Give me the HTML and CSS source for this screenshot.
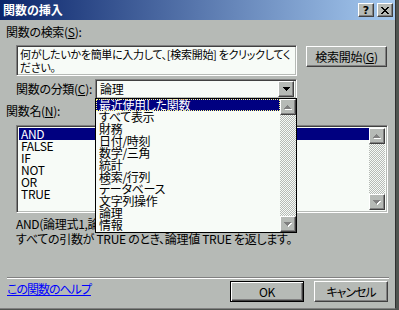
FILE: index.html
```html
<!DOCTYPE html>
<html lang="ja">
  <head>
    <meta charset="UTF-8" />
    <title>関数の挿入</title>
    <link rel="stylesheet" href="styles.css">
  </head>
  <body>
  <div class="dialog">
    <div class="titlebar">
      <span class="title">関数の挿入</span>
      <span class="tbtn help">?</span>
      <span class="tbtn">
        <svg width="8" height="7" viewBox="0 0 8 7"><path d="M0 0h2v1h1v1h2V1h1V0h2v1H7v1H6v1H5v1h1v1h1v1h1v1H6V6H5V5H3v1H2v1H0V6h1V5h1V4h1V3H2V2H1V1H0z" fill="#000"/></svg>
      </span>
    </div>

    <div class="content">
      <div class="label label-search">関数の検索(<u>S</u>):</div>
      <div class="search-row">
        <div class="field search-box">何がしたいかを簡単に入力して、[検索開始] をクリックしてく<br>ださい。</div>
        <div class="btn search-btn">検索開始(<u>G</u>)</div>
      </div>

      <div class="cat-row">
        <div class="label cat-label">関数の分類(<u>C</u>):</div>
        <div class="combo-wrap">
          <div class="field combo">
            <span class="combo-value">論理</span>
            <span class="sb-btn combo-btn">
              <svg width="7" height="4" viewBox="0 0 7 4"><path d="M0 0h7v1H6v1H5v1H4v1H3V3H2V2H1V1H0z" fill="#000"/></svg>
            </span>
          </div>
          <div class="dropdown">
            <ul class="items">
              <li class="selected focus">最近使用した関数</li>
              <li>すべて表示</li>
              <li>財務</li>
              <li>日付/時刻</li>
              <li>数学/三角</li>
              <li>統計</li>
              <li>検索/行列</li>
              <li>データベース</li>
              <li>文字列操作</li>
              <li>論理</li>
              <li>情報</li>
            </ul>
            <div class="scrollbar">
              <span class="sb-btn">
                <svg width="8" height="5" viewBox="0 0 8 5"><path d="M4 1h1v1h1v1h1v1h1v1H1V4h1V3h1V2h1z" fill="#fff"/><path d="M3 0h1v1h1v1h1v1h1v1H0V3h1V2h1V1h1z" fill="#808080"/></svg>
              </span>
              <span class="sb-btn">
                <svg width="8" height="5" viewBox="0 0 8 5"><path d="M1 1h7v1H7v1H6v1H5v1H4V4H3V3H2V2H1z" fill="#fff"/><path d="M0 0h7v1H6v1H5v1H4v1H3V3H2V2H1V1H0z" fill="#808080"/></svg>
              </span>
            </div>
          </div>
        </div>
      </div>

      <div class="label label-name">関数名(<u>N</u>):</div>
      <div class="field listbox">
        <ul class="items">
          <li class="selected">AND</li>
          <li>FALSE</li>
          <li>IF</li>
          <li>NOT</li>
          <li>OR</li>
          <li>TRUE</li>
        </ul>
        <div class="scrollbar">
          <span class="sb-btn">
            <svg width="8" height="5" viewBox="0 0 8 5"><path d="M4 1h1v1h1v1h1v1h1v1H1V4h1V3h1V2h1z" fill="#fff"/><path d="M3 0h1v1h1v1h1v1h1v1H0V3h1V2h1V1h1z" fill="#808080"/></svg>
          </span>
          <span class="sb-btn">
            <svg width="8" height="5" viewBox="0 0 8 5"><path d="M1 1h7v1H7v1H6v1H5v1H4V4H3V3H2V2H1z" fill="#fff"/><path d="M0 0h7v1H6v1H5v1H4v1H3V3H2V2H1V1H0z" fill="#808080"/></svg>
          </span>
        </div>
      </div>

      <div class="desc">
        <div>AND(論理式1,論理式2,...)</div>
        <div>すべての引数が TRUE のとき、論理値 TRUE を返します。</div>
      </div>

      <div class="separator"></div>

      <div class="footer">
        <a class="help-link" href="#">この関数のヘルプ</a>
        <div class="btn default">OK</div>
        <div class="btn kana">キャンセル</div>
      </div>
    </div>
  </div>
  </body>
</html>
```

FILE: styles.css
```css
* {
  box-sizing: border-box;
}

body {
  margin: 0;
  background-color: #505450;
  font: 12px/14px "Noto Sans CJK JP", "Noto Sans CJK SC", sans-serif;
  font-feature-settings: "palt";
  color: #000;
}

.dialog {
  width: 396px;
  height: 309px;
  background-color: #b6bab6;
  border-right: 1px solid #303030;
  border-bottom: 1px solid #808080;
}

.titlebar {
  display: flex;
  align-items: center;
  height: 20px;
  padding: 0 2px 0 3px;
  background: linear-gradient(to right, #0a246a, #a6caf0);
}

.title {
  margin-right: auto;
  color: #fff;
  font-weight: bold;
}

.tbtn {
  display: flex;
  align-items: center;
  justify-content: center;
  width: 16px;
  height: 14px;
  background-color: #b6bab6;
  border: 1px solid;
  border-color: #fff #404040 #404040 #fff;
  box-shadow: inset -1px -1px #808080;
  font: bold 11px/1 "DejaVu Sans", sans-serif;
}

.help {
  margin-right: 3px;
}

.content {
  padding: 0 7px 0 6px;
  letter-spacing: -0.3px;
}

.label {
  height: 14px;
  white-space: nowrap;
}

.label-search {
  margin-top: 5px;
}

.field {
  background-color: #f7fbf7;
  border: 1px solid;
  border-color: #808080 #fff #fff #808080;
  box-shadow: inset 1px 1px #404040, inset -1px -1px #b6bab6;
}

.btn {
  display: flex;
  align-items: center;
  justify-content: center;
  width: 74px;
  height: 21px;
  background-color: #b6bab6;
  border: 1px solid;
  border-color: #fff #404040 #404040 #fff;
  box-shadow: inset -1px -1px #808080;
  white-space: nowrap;
}

.btn.default {
  border-color: #000;
  box-shadow: inset 1px 1px #fff, inset -1px -1px #404040, inset -2px -2px #808080;
}

.btn.kana {
  letter-spacing: -1px;
}

.search-row {
  display: flex;
  margin-top: 6px;
  padding-left: 10px;
}

.search-box {
  width: 281px;
  height: 31px;
  padding: 2px 3px;
  font-size: 11px;
  line-height: 13px;
  white-space: nowrap;
  overflow: hidden;
}

.search-btn {
  width: 81px;
  margin: 1px 0 0 9px;
}

.cat-row {
  display: flex;
  align-items: center;
  margin-top: 3px;
  padding-left: 10px;
}

.cat-label {
  width: 79px;
}

.combo-wrap {
  position: relative;
}

.combo {
  display: flex;
  align-items: center;
  width: 202px;
  height: 20px;
  padding: 2px;
}

.combo-value {
  padding-left: 2px;
}

.sb-btn {
  display: flex;
  align-items: center;
  justify-content: center;
  width: 16px;
  height: 16px;
  background-color: #b6bab6;
  border: 1px solid;
  border-color: #fff #404040 #404040 #fff;
  box-shadow: inset -1px -1px #808080;
}

.combo-btn {
  margin-left: auto;
}

.dropdown {
  position: absolute;
  top: 19px;
  left: 0;
  z-index: 2;
  display: flex;
  width: 202px;
  height: 135px;
  background-color: #f7fbf7;
  border: 1px solid #000;
}

.items {
  flex: 1;
  margin: 0;
  padding: 0;
  list-style: none;
}

.items li {
  height: 12px;
  padding-left: 3px;
  line-height: 12px;
  white-space: nowrap;
}

.items li.selected {
  background-color: #000080;
  color: #fff;
}

.items li.focus {
  outline: 1px dotted #ffff80;
  outline-offset: -1px;
}

.scrollbar {
  display: flex;
  flex-direction: column;
  justify-content: space-between;
  width: 16px;
  background: repeating-conic-gradient(#f7fbf7 0 25%, #b6bab6 0 50%) 0 0 / 2px 2px;
}

.label-name {
  margin-top: 5px;
}

.listbox {
  display: flex;
  width: 372px;
  height: 88px;
  margin: 7px 0 0 10px;
  padding: 2px;
}

.listbox .items li {
  padding-left: 2px;
}

.desc {
  margin-top: 3px;
  padding-left: 10px;
  line-height: 15px;
  white-space: nowrap;
}

.separator {
  height: 2px;
  margin: 31px -1px 0 1px;
  border-top: 1px solid #808080;
  border-bottom: 1px solid #fff;
}

.footer {
  display: flex;
  align-items: flex-start;
  gap: 10px;
  margin-top: 2px;
}

.help-link {
  margin: 1px auto 0 1px;
  color: #0000ff;
  letter-spacing: -1px;
}
```
